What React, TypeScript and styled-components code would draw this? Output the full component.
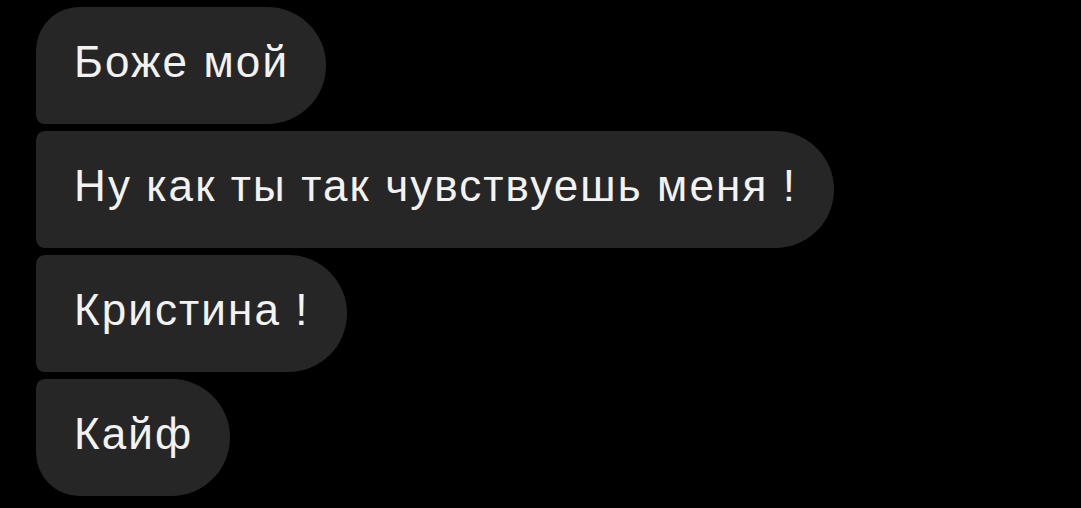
import React from 'react';
import styled, { createGlobalStyle } from 'styled-components';

type Position = 'first' | 'middle' | 'last';

interface Message {
    id: number;
    text: string;
    position: Position;
}

const messages: Message[] = [
    { id: 1, text: 'Боже мой', position: 'first' },
    { id: 2, text: 'Ну как ты так чувствуешь меня !', position: 'middle' },
    { id: 3, text: 'Кристина !', position: 'middle' },
    { id: 4, text: 'Кайф', position: 'last' },
];

const GlobalStyle = createGlobalStyle`
    html, body {
        margin: 0;
        padding: 0;
        background: #000;
    }
`;

const Thread = styled.div`
    width: 1081px;
    height: 508px;
    box-sizing: border-box;
    padding: 7px 0 0 36px;
    display: flex;
    flex-direction: column;
    align-items: flex-start;
    gap: 7px;
    background: #000;
    overflow: hidden;
`;

const radiusFor = (position: Position) => {
    switch (position) {
        case 'first':
            return '44px 59px 59px 9px';
        case 'last':
            return '9px 59px 59px 44px';
        default:
            return '9px 59px 59px 9px';
    }
};

const Bubble = styled.div<{ $position: Position }>`
    height: 117px;
    box-sizing: border-box;
    padding: 0 37px 8px 38px;
    display: flex;
    align-items: center;
    background: #262626;
    border-radius: ${props => radiusFor(props.$position)};
    color: #f2f2f2;
    font-family: 'Liberation Sans', Arial, sans-serif;
    font-size: 44px;
    letter-spacing: 2.1px;
    white-space: nowrap;
`;

export default function App() {
    return (
        <>
            <GlobalStyle />
            <Thread>
                {messages.map(m => (
                    <Bubble key={m.id} $position={m.position}>
                        {m.text}
                    </Bubble>
                ))}
            </Thread>
        </>
    );
}
